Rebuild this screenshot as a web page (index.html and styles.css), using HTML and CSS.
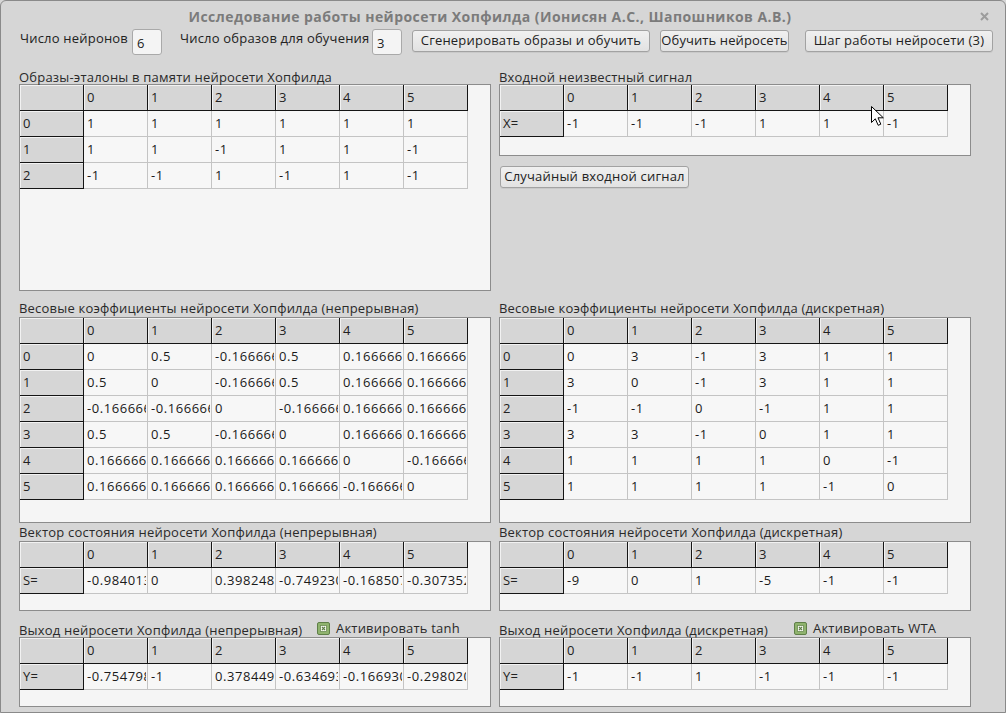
FILE: index.html
```html
<!DOCTYPE html>
<html lang="ru">
<head>
<meta charset="utf-8">
<title>Исследование работы нейросети Хопфилда</title>
<link rel="stylesheet" href="styles.css">
</head>
<body>
<div class="window">
  <div class="titlebar">
    <div class="title">Исследование работы нейросети Хопфилда (Ионисян А.С., Шапошников А.В.)</div>
    <div class="close"><svg width="9" height="9" viewBox="0 0 9 9"><path d="M1 1 L8 8 M8 1 L1 8" stroke="#9c9c9c" stroke-width="2" fill="none"/></svg></div>
  </div>

  <div class="toolbar">
    <div class="lbl lbl1">Число нейронов</div>
    <div class="spin">6</div>
    <div class="lbl lbl2">Число образов для обучения</div>
    <div class="spin">3</div>
    <div class="btn btn1">Сгенерировать образы и обучить</div>
    <div class="btn btn2">Обучить нейросеть</div>
    <div class="btn btn3">Шаг работы нейросети (3)</div>
  </div>

  <div class="grid">
    <!-- Row A -->
    <div class="panel row-a">
      <div class="caption">Образы-эталоны в памяти нейросети Хопфилда</div>
      <div class="box box-a">
        <div class="tbl">
          <div class="h corner"></div><div class="h">0</div><div class="h">1</div><div class="h">2</div><div class="h">3</div><div class="h">4</div><div class="h">5</div>
          <div class="rh">0</div><div class="c"><span>1</span></div><div class="c"><span>1</span></div><div class="c"><span>1</span></div><div class="c"><span>1</span></div><div class="c"><span>1</span></div><div class="c"><span>1</span></div>
          <div class="rh">1</div><div class="c"><span>1</span></div><div class="c"><span>1</span></div><div class="c"><span>-1</span></div><div class="c"><span>1</span></div><div class="c"><span>1</span></div><div class="c"><span>-1</span></div>
          <div class="rh">2</div><div class="c"><span>-1</span></div><div class="c"><span>-1</span></div><div class="c"><span>1</span></div><div class="c"><span>-1</span></div><div class="c"><span>1</span></div><div class="c"><span>-1</span></div>
        </div>
      </div>
    </div>
    <div class="panel row-a">
      <div class="caption">Входной неизвестный сигнал</div>
      <div class="box box-x">
        <div class="tbl">
          <div class="h corner"></div><div class="h">0</div><div class="h">1</div><div class="h">2</div><div class="h">3</div><div class="h">4</div><div class="h">5</div>
          <div class="rh">X=</div><div class="c"><span>-1</span></div><div class="c"><span>-1</span></div><div class="c"><span>-1</span></div><div class="c"><span>1</span></div><div class="c"><span>1</span></div><div class="c"><span>-1</span></div>
        </div>
      </div>
      <div class="btn btn-rand">Случайный входной сигнал</div>
    </div>

    <!-- Row B -->
    <div class="panel row-b">
      <div class="caption cap-gap">Весовые коэффициенты нейросети Хопфилда (непрерывная)</div>
      <div class="box box-w">
        <div class="tbl">
          <div class="h corner"></div><div class="h">0</div><div class="h">1</div><div class="h">2</div><div class="h">3</div><div class="h">4</div><div class="h">5</div>
          <div class="rh">0</div><div class="c"><span>0</span></div><div class="c"><span>0.5</span></div><div class="c"><span>-0.166666666666667</span></div><div class="c"><span>0.5</span></div><div class="c"><span>0.166666666666667</span></div><div class="c"><span>0.166666666666667</span></div>
          <div class="rh">1</div><div class="c"><span>0.5</span></div><div class="c"><span>0</span></div><div class="c"><span>-0.166666666666667</span></div><div class="c"><span>0.5</span></div><div class="c"><span>0.166666666666667</span></div><div class="c"><span>0.166666666666667</span></div>
          <div class="rh">2</div><div class="c"><span>-0.166666666666667</span></div><div class="c"><span>-0.166666666666667</span></div><div class="c"><span>0</span></div><div class="c"><span>-0.166666666666667</span></div><div class="c"><span>0.166666666666667</span></div><div class="c"><span>0.166666666666667</span></div>
          <div class="rh">3</div><div class="c"><span>0.5</span></div><div class="c"><span>0.5</span></div><div class="c"><span>-0.166666666666667</span></div><div class="c"><span>0</span></div><div class="c"><span>0.166666666666667</span></div><div class="c"><span>0.166666666666667</span></div>
          <div class="rh">4</div><div class="c"><span>0.166666666666667</span></div><div class="c"><span>0.166666666666667</span></div><div class="c"><span>0.166666666666667</span></div><div class="c"><span>0.166666666666667</span></div><div class="c"><span>0</span></div><div class="c"><span>-0.166666666666667</span></div>
          <div class="rh">5</div><div class="c"><span>0.166666666666667</span></div><div class="c"><span>0.166666666666667</span></div><div class="c"><span>0.166666666666667</span></div><div class="c"><span>0.166666666666667</span></div><div class="c"><span>-0.166666666666667</span></div><div class="c"><span>0</span></div>
        </div>
      </div>
    </div>
    <div class="panel row-b">
      <div class="caption cap-gap">Весовые коэффициенты нейросети Хопфилда (дискретная)</div>
      <div class="box box-w">
        <div class="tbl">
          <div class="h corner"></div><div class="h">0</div><div class="h">1</div><div class="h">2</div><div class="h">3</div><div class="h">4</div><div class="h">5</div>
          <div class="rh">0</div><div class="c"><span>0</span></div><div class="c"><span>3</span></div><div class="c"><span>-1</span></div><div class="c"><span>3</span></div><div class="c"><span>1</span></div><div class="c"><span>1</span></div>
          <div class="rh">1</div><div class="c"><span>3</span></div><div class="c"><span>0</span></div><div class="c"><span>-1</span></div><div class="c"><span>3</span></div><div class="c"><span>1</span></div><div class="c"><span>1</span></div>
          <div class="rh">2</div><div class="c"><span>-1</span></div><div class="c"><span>-1</span></div><div class="c"><span>0</span></div><div class="c"><span>-1</span></div><div class="c"><span>1</span></div><div class="c"><span>1</span></div>
          <div class="rh">3</div><div class="c"><span>3</span></div><div class="c"><span>3</span></div><div class="c"><span>-1</span></div><div class="c"><span>0</span></div><div class="c"><span>1</span></div><div class="c"><span>1</span></div>
          <div class="rh">4</div><div class="c"><span>1</span></div><div class="c"><span>1</span></div><div class="c"><span>1</span></div><div class="c"><span>1</span></div><div class="c"><span>0</span></div><div class="c"><span>-1</span></div>
          <div class="rh">5</div><div class="c"><span>1</span></div><div class="c"><span>1</span></div><div class="c"><span>1</span></div><div class="c"><span>1</span></div><div class="c"><span>-1</span></div><div class="c"><span>0</span></div>
        </div>
      </div>
    </div>

    <!-- Row C -->
    <div class="panel row-c">
      <div class="caption cap-gap">Вектор состояния нейросети Хопфилда (непрерывная)</div>
      <div class="box box-v">
        <div class="tbl">
          <div class="h corner"></div><div class="h">0</div><div class="h">1</div><div class="h">2</div><div class="h">3</div><div class="h">4</div><div class="h">5</div>
          <div class="rh">S=</div><div class="c"><span>-0.984013</span></div><div class="c"><span>0</span></div><div class="c"><span>0.398248</span></div><div class="c"><span>-0.749230</span></div><div class="c"><span>-0.168507</span></div><div class="c"><span>-0.307352</span></div>
        </div>
      </div>
    </div>
    <div class="panel row-c">
      <div class="caption cap-gap">Вектор состояния нейросети Хопфилда (дискретная)</div>
      <div class="box box-v">
        <div class="tbl">
          <div class="h corner"></div><div class="h">0</div><div class="h">1</div><div class="h">2</div><div class="h">3</div><div class="h">4</div><div class="h">5</div>
          <div class="rh">S=</div><div class="c"><span>-9</span></div><div class="c"><span>0</span></div><div class="c"><span>1</span></div><div class="c"><span>-5</span></div><div class="c"><span>-1</span></div><div class="c"><span>-1</span></div>
        </div>
      </div>
    </div>

    <!-- Row D -->
    <div class="panel row-d">
      <div class="capline capline-l">
        <div class="caption">Выход нейросети Хопфилда (непрерывная)</div>
        <div class="check">
          <svg class="cb" width="13" height="13" viewBox="0 0 13 13"><rect x="0.5" y="0.5" width="12" height="12" rx="1.5" fill="#8fb36e" stroke="#5f7f48"/><rect x="3.5" y="3.5" width="6" height="6" fill="#f4f7ef" stroke="#6d8c55" stroke-width="0.8"/><path d="M5 5 L8 8 M8 5 L5 8" stroke="#5f7f48" stroke-width="1.1"/></svg>
          <span>Активировать tanh</span>
        </div>
      </div>
      <div class="box box-v">
        <div class="tbl">
          <div class="h corner"></div><div class="h">0</div><div class="h">1</div><div class="h">2</div><div class="h">3</div><div class="h">4</div><div class="h">5</div>
          <div class="rh">Y=</div><div class="c"><span>-0.754798</span></div><div class="c"><span>-1</span></div><div class="c"><span>0.378449</span></div><div class="c"><span>-0.634693</span></div><div class="c"><span>-0.166930</span></div><div class="c"><span>-0.298020</span></div>
        </div>
      </div>
    </div>
    <div class="panel row-d">
      <div class="capline capline-r">
        <div class="caption">Выход нейросети Хопфилда (дискретная)</div>
        <div class="check">
          <svg class="cb" width="13" height="13" viewBox="0 0 13 13"><rect x="0.5" y="0.5" width="12" height="12" rx="1.5" fill="#8fb36e" stroke="#5f7f48"/><rect x="3.5" y="3.5" width="6" height="6" fill="#f4f7ef" stroke="#6d8c55" stroke-width="0.8"/><path d="M5 5 L8 8 M8 5 L5 8" stroke="#5f7f48" stroke-width="1.1"/></svg>
          <span>Активировать WTA</span>
        </div>
      </div>
      <div class="box box-v">
        <div class="tbl">
          <div class="h corner"></div><div class="h">0</div><div class="h">1</div><div class="h">2</div><div class="h">3</div><div class="h">4</div><div class="h">5</div>
          <div class="rh">Y=</div><div class="c"><span>-1</span></div><div class="c"><span>-1</span></div><div class="c"><span>1</span></div><div class="c"><span>-1</span></div><div class="c"><span>-1</span></div><div class="c"><span>-1</span></div>
        </div>
      </div>
    </div>
  </div>

  <svg class="cursor" width="14" height="21" viewBox="0 0 14 21"><path d="M0.5 0.5 L0.5 16.5 L4.3 12.8 L7.2 19.3 L9.8 18.2 L7 11.8 L12.3 11.8 Z" fill="#ffffff" stroke="#000000" stroke-width="1" stroke-linejoin="round"/></svg>
</div>
</body>
</html>
```

FILE: styles.css
```css
* { box-sizing: border-box; }

body {
  margin: 0;
  background: #d6d6d6;
  font-family: "Open Sans", "Noto Sans", sans-serif;
  font-size: 13px;
  letter-spacing: 0.2px;
  color: #222;
}

.window {
  position: relative;
  width: 1006px;
  height: 713px;
  border: 1px solid #8a8a8a;
  border-radius: 6px 6px 0 0;
  background: #d6d6d6;
  overflow: hidden;
}

.titlebar {
  height: 28px;
  padding-top: 6px;
  display: grid;
  grid-template-columns: 1fr 30px;
}

.title {
  text-align: center;
  font-weight: bold;
  font-size: 14px;
  line-height: 20px;
  letter-spacing: 0.45px;
  color: #7b7b7b;
  padding-left: 4px;
}

.close {
  padding-top: 5px;
  padding-left: 5px;
  line-height: 0;
}

.toolbar {
  display: flex;
  align-items: flex-start;
  height: 26px;
  padding-left: 19px;
}

.lbl {
  line-height: 18px;
  white-space: nowrap;
}
.lbl1 { width: 112px; }
.lbl2 { width: 192px; margin-left: 18px; }

.spin {
  width: 30px;
  height: 26px;
  border: 1px solid #a9a9a9;
  border-radius: 3px;
  background: #f4f4f4;
  padding: 4px 0 0 4px;
  line-height: 18px;
}

.btn {
  height: 22px;
  margin-top: 1px;
  border: 1px solid #a2a2a2;
  border-radius: 3px;
  background: linear-gradient(#f0f0f0, #e2e2e2);
  box-shadow: 0 1px 0 rgba(0,0,0,0.06);
  text-align: center;
  line-height: 19px;
  white-space: nowrap;
  color: #222;
}
.btn1 { width: 238px; margin-left: 10px; }
.btn2 { width: 129px; margin-left: 10px; letter-spacing: 0.1px; }
.btn3 { width: 188px; margin-left: 16px; }

.btn-rand {
  width: 189px;
  margin-top: 10px;
  margin-left: 1px;
}

.grid {
  display: grid;
  grid-template-columns: 472px 472px;
  column-gap: 8px;
  margin-left: 18px;
  align-items: start;
}

.row-a { margin-top: 15px; }
.row-b { margin-top: 10px; }
.row-c { margin-top: 2px; }
.row-d { margin-top: 12px; }

.caption {
  line-height: 14px;
  height: 14px;
  white-space: nowrap;
  color: #2a2a2a;
}
.cap-gap { margin-bottom: 2px; }

.capline {
  display: grid;
  height: 14px;
  align-items: start;
}
.capline-l { grid-template-columns: 298px auto; }
.capline-r { grid-template-columns: 295px auto; }

.check {
  display: flex;
  align-items: flex-start;
  margin-top: -2px;
  line-height: 14px;
  white-space: nowrap;
  color: #2a2a2a;
}
.cb { margin-top: 1px; margin-right: 6px; flex: none; }

.box {
  border: 1px solid #8c8c8c;
  background: #f5f5f5;
  overflow: hidden;
}
.box-a { height: 207px; }
.box-x { height: 72px; }
.box-w { height: 206px; }
.box-v { height: 70px; }

.tbl {
  display: grid;
  grid-template-columns: repeat(7, 64px);
  grid-auto-rows: 26px;
}

.h, .rh {
  background: #d6d6d6;
  border-right: 1px solid #151515;
  border-bottom: 1px solid #151515;
  box-shadow: inset 1px 1px 0 #f2f2f2;
  padding-left: 3px;
  line-height: 25px;
  white-space: nowrap;
  overflow: hidden;
  color: #222;
}

.c {
  background: #f7f7f7;
  border-right: 1px solid #c4c4c4;
  border-bottom: 1px solid #c4c4c4;
  padding-left: 3px;
  line-height: 25px;
  white-space: nowrap;
  letter-spacing: 0.55px;
  color: #1a1a1a;
}
.c span {
  display: block;
  overflow: hidden;
  margin-right: 1px;
}

.cursor {
  position: absolute;
  left: 870px;
  top: 105px;
}
```
